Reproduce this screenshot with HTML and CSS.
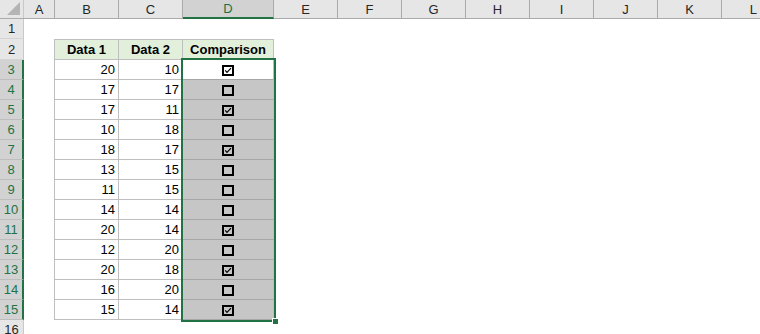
FILE: index.html
```html
<!DOCTYPE html>
<html lang="en">
  <head>
    <meta charset="UTF-8" />
    <title>Comparison checkboxes</title>
    <link rel="stylesheet" href="styles.css">
  </head>
  <body>
    <svg class="defs" width="0" height="0">
      <symbol id="box-on" viewBox="0 0 12 11">
        <rect x="1" y="1" width="10" height="9" fill="none" stroke="#000" stroke-width="2" />
        <polyline points="3.2,5.4 5,7.4 9,3.2" fill="none" stroke="#000" stroke-width="1.2" />
      </symbol>
      <symbol id="box-off" viewBox="0 0 12 11">
        <rect x="1" y="1" width="10" height="9" fill="none" stroke="#000" stroke-width="2" />
      </symbol>
    </svg>

    <div class="sheet">
      <div class="col-heads">
        <div class="corner"><span class="tri"></span></div>
        <div class="ch">A</div>
        <div class="ch">B</div>
        <div class="ch">C</div>
        <div class="ch active">D</div>
        <div class="ch">E</div>
        <div class="ch">F</div>
        <div class="ch">G</div>
        <div class="ch">H</div>
        <div class="ch">I</div>
        <div class="ch">J</div>
        <div class="ch">K</div>
        <div class="ch last">L</div>
      </div>

      <div class="row"><div class="rh">1</div></div>
      <div class="row first">
        <div class="rh">2</div>
        <div class="cell b head">Data 1</div>
        <div class="cell c head">Data 2</div>
        <div class="cell d head">Comparison</div>
      </div>
      <div class="row sel">
        <div class="rh">3</div>
        <div class="cell b">20</div><div class="cell c">10</div>
        <div class="cell d cur"><svg class="cb"><use href="#box-on" /></svg></div>
      </div>
      <div class="row sel">
        <div class="rh">4</div>
        <div class="cell b">17</div><div class="cell c">17</div>
        <div class="cell d"><svg class="cb"><use href="#box-off" /></svg></div>
      </div>
      <div class="row sel">
        <div class="rh">5</div>
        <div class="cell b">17</div><div class="cell c">11</div>
        <div class="cell d"><svg class="cb"><use href="#box-on" /></svg></div>
      </div>
      <div class="row sel">
        <div class="rh">6</div>
        <div class="cell b">10</div><div class="cell c">18</div>
        <div class="cell d"><svg class="cb"><use href="#box-off" /></svg></div>
      </div>
      <div class="row sel">
        <div class="rh">7</div>
        <div class="cell b">18</div><div class="cell c">17</div>
        <div class="cell d"><svg class="cb"><use href="#box-on" /></svg></div>
      </div>
      <div class="row sel">
        <div class="rh">8</div>
        <div class="cell b">13</div><div class="cell c">15</div>
        <div class="cell d"><svg class="cb"><use href="#box-off" /></svg></div>
      </div>
      <div class="row sel">
        <div class="rh">9</div>
        <div class="cell b">11</div><div class="cell c">15</div>
        <div class="cell d"><svg class="cb"><use href="#box-off" /></svg></div>
      </div>
      <div class="row sel">
        <div class="rh">10</div>
        <div class="cell b">14</div><div class="cell c">14</div>
        <div class="cell d"><svg class="cb"><use href="#box-off" /></svg></div>
      </div>
      <div class="row sel">
        <div class="rh">11</div>
        <div class="cell b">20</div><div class="cell c">14</div>
        <div class="cell d"><svg class="cb"><use href="#box-on" /></svg></div>
      </div>
      <div class="row sel">
        <div class="rh">12</div>
        <div class="cell b">12</div><div class="cell c">20</div>
        <div class="cell d"><svg class="cb"><use href="#box-off" /></svg></div>
      </div>
      <div class="row sel">
        <div class="rh">13</div>
        <div class="cell b">20</div><div class="cell c">18</div>
        <div class="cell d"><svg class="cb"><use href="#box-on" /></svg></div>
      </div>
      <div class="row sel">
        <div class="rh">14</div>
        <div class="cell b">16</div><div class="cell c">20</div>
        <div class="cell d"><svg class="cb"><use href="#box-off" /></svg></div>
      </div>
      <div class="row sel">
        <div class="rh">15</div>
        <div class="cell b">15</div><div class="cell c">14</div>
        <div class="cell d"><svg class="cb"><use href="#box-on" /></svg></div>
      </div>
      <div class="row"><div class="rh">16</div></div>

      <div class="selection"><span class="handle"></span></div>
    </div>
  </body>
</html>
```

FILE: styles.css
```css
:root {
  --head-bg: #e6e6e6;
  --head-sel-bg: #d2d2d2;
  --head-line: #ababab;
  --grid-line: #bfbfbf;
  --green: #217346;
  --pick-bg: #c6c6c6;
  --table-head-bg: #e2efda;
}

* {
  box-sizing: border-box;
}

body {
  margin: 0;
  overflow: hidden;
  background: #ffffff;
  font-family: "Liberation Sans", Arial, sans-serif;
  font-size: 13px;
  color: #000000;
}

.defs {
  position: absolute;
}

.sheet {
  position: relative;
  width: 760px;
  height: 334px;
  overflow: hidden;
}

/* E..K are 64px, L is cut by the window edge */
.col-heads {
  display: grid;
  grid-template-columns: 24px 31px 64px 64px 91px repeat(7, 64px) 38px;
  height: 19px;
  background: var(--head-bg);
  border-bottom: 1px solid var(--head-line);
}

.corner {
  position: relative;
  border-right: 1px solid #c8c8c8;
}
.tri {
  position: absolute;
  right: 3px;
  bottom: 3px;
  width: 0;
  height: 0;
  border-left: 13px solid transparent;
  border-bottom: 13px solid #b4b4b4;
}

.ch {
  display: flex;
  align-items: center;
  justify-content: center;
  border-right: 1px solid var(--head-line);
  color: #262626;
  font-size: 13px;
}
.ch.last {
  justify-content: flex-end;
  padding-right: 3px;
  border-right: 0;
}
.ch.active {
  background: var(--head-sel-bg);
  color: var(--green);
  margin-bottom: -1px;
  border-bottom: 2px solid var(--green);
}

.row {
  display: grid;
  grid-template-columns: 24px 31px 64px 64px 91px;
  height: 20px;
}
.row.first {
  height: 21px;
}

.rh {
  grid-column: 1;
  display: flex;
  align-items: center;
  justify-content: center;
  background: var(--head-bg);
  border-right: 1px solid #c8c8c8;
  border-bottom: 1px solid #d4d4d4;
  color: #262626;
}
.row.sel .rh {
  background: var(--head-sel-bg);
  color: var(--green);
  border-right: 2px solid var(--green);
  border-bottom-color: #bdbdbd;
}

.cell {
  display: flex;
  align-items: center;
  padding: 0 3px;
  border-right: 1px solid var(--grid-line);
  border-bottom: 1px solid var(--grid-line);
}
.cell.b {
  grid-column: 3;
  justify-content: flex-end;
  border-left: 1px solid var(--grid-line);
  margin-left: -1px;
}
.cell.c {
  grid-column: 4;
  justify-content: flex-end;
}
.cell.d {
  grid-column: 5;
  justify-content: center;
  background: var(--pick-bg);
  border-bottom-color: #a6a6a6;
}
.cell.d.cur {
  background: #ffffff;
}
.cell.head {
  justify-content: center;
  border-top: 1px solid var(--grid-line);
  background: var(--table-head-bg);
  font-weight: bold;
}
.cell.d.head {
  background: var(--table-head-bg);
  border-bottom-color: var(--grid-line);
}

.cb {
  width: 12px;
  height: 11px;
  margin-top: 1px;
}

/* selected range D3:D15 */
.selection {
  position: absolute;
  left: 181px;
  top: 58px;
  width: 95px;
  height: 264px;
  border: 2px solid var(--green);
}
.handle {
  position: absolute;
  right: -5px;
  bottom: -5px;
  width: 7px;
  height: 7px;
  background: var(--green);
  border: 1px solid #ffffff;
}
```
